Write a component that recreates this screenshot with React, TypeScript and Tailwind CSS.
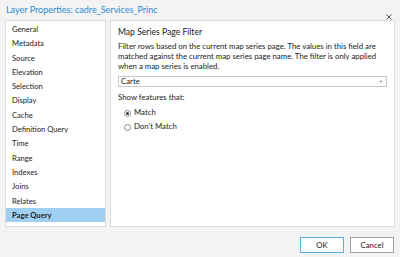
import { useState } from "react";

const pages = [
  "General",
  "Metadata",
  "Source",
  "Elevation",
  "Selection",
  "Display",
  "Cache",
  "Definition Query",
  "Time",
  "Range",
  "Indexes",
  "Joins",
  "Relates",
  "Page Query",
];

export default function App() {
  const [active, setActive] = useState("Page Query");
  const [match, setMatch] = useState(true);

  return (
    <div
      className="w-[400px] h-[257px] bg-[#f3f3f3] text-[#222] flex flex-col overflow-hidden"
      style={{ fontFamily: 'Lato, "Noto Sans", sans-serif' }}
    >
      {/* Title bar */}
      <div className="h-[20px] flex items-start justify-between pl-[6px] pr-[8px]">
        <div className="text-[9px] leading-[20px] text-[#2a8bd6]">
          Layer Properties: cadre_Services_Princ
        </div>
        <svg className="mt-[14px]" width="6" height="6" viewBox="0 0 6 6">
          <path d="M0.5 0.5 L5.5 5.5 M5.5 0.5 L0.5 5.5" stroke="#555" strokeWidth="1" />
        </svg>
      </div>

      {/* Body */}
      <div className="flex gap-[4px] pl-[5px] pr-[5px] h-[207px]">
        {/* Page list */}
        <div className="w-[101px] bg-white border border-[#dcdcdc] pt-[1px]">
          {pages.map((p) => (
            <div
              key={p}
              onClick={() => setActive(p)}
              className={`h-[14.3px] leading-[14px] pl-[6px] text-[7.6px] ${
                active === p ? "bg-[#9fd0f3] font-bold" : ""
              }`}
            >
              {p}
            </div>
          ))}
        </div>

        {/* Page content */}
        <div className="flex-1 bg-white border border-[#dcdcdc] px-[7px] pt-[4px]">
          <div className="text-[8.6px] leading-[14px]">Map Series Page Filter</div>
          <p className="mt-[2px] text-[7.8px] leading-[10px]">
            Filter rows based on the current map series page. The values in this field are
            matched against the current map series page name. The filter is only applied
            when a map series is enabled.
          </p>
          <div className="mt-[5px] h-[11px] border border-[#c8c8c8] flex items-center justify-between pl-[2px] pr-[3px] text-[7.8px] leading-[9px]">
            <span>Carte</span>
            <span className="text-[4px] text-[#777]">▼</span>
          </div>
          <div className="mt-[4px] text-[7.8px] leading-[12px]">Show features that:</div>
          <div className="mt-[3px] pl-[6px] text-[7.8px]">
            <label className="flex items-center gap-[3px] h-[14px]" onClick={() => setMatch(true)}>
              <span className="w-[7px] h-[7px] rounded-full border border-[#888] flex items-center justify-center">
                {match && <span className="w-[3px] h-[3px] rounded-full bg-[#333]" />}
              </span>
              Match
            </label>
            <label className="flex items-center gap-[3px] h-[14px]" onClick={() => setMatch(false)}>
              <span className="w-[7px] h-[7px] rounded-full border border-[#888] flex items-center justify-center">
                {!match && <span className="w-[3px] h-[3px] rounded-full bg-[#333]" />}
              </span>
              Don't Match
            </label>
          </div>
        </div>
      </div>

      {/* Footer buttons */}
      <div className="flex justify-end gap-[6px] pr-[6px] pt-[10px]">
        <button className="w-[44px] h-[16px] border border-[#5aaee8] bg-white text-[7.8px] leading-[14px]">
          OK
        </button>
        <button className="w-[44px] h-[16px] border border-[#a0a0a0] bg-white text-[7.8px] leading-[14px]">
          Cancel
        </button>
      </div>
    </div>
  );
}
